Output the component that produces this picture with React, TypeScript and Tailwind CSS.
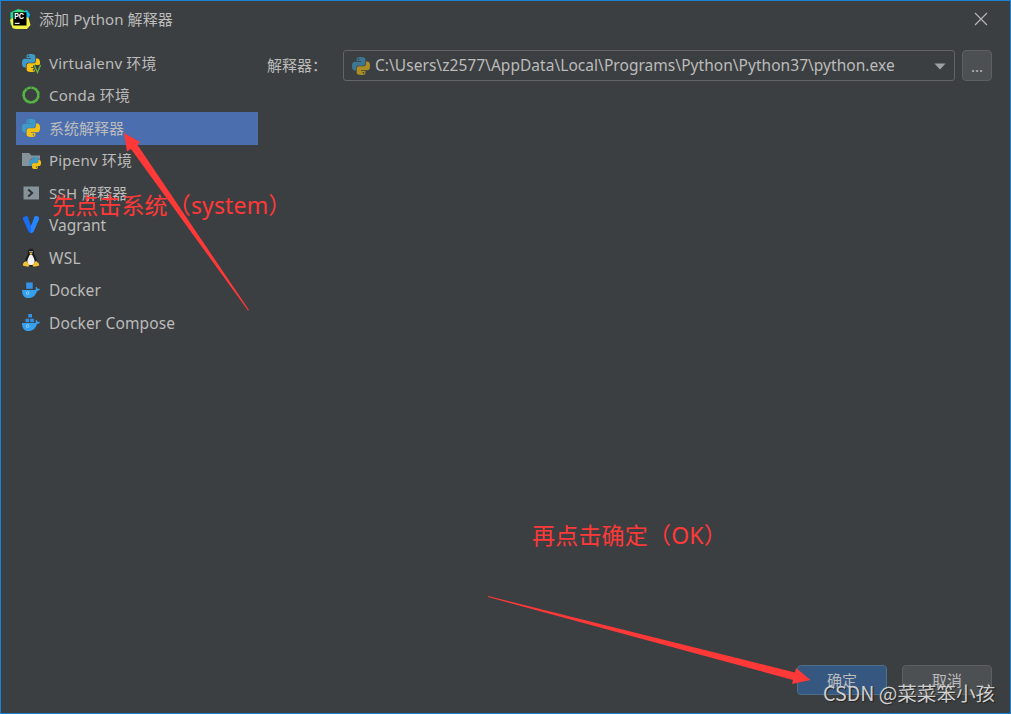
import React from 'react'

const fontClass = "font-['Noto_Sans','Noto_Sans_CJK_SC',sans-serif]"

function PythonIcon({ className = '' }: { className?: string }) {
  const half =
    'M14.25.18l.9.2.73.26.59.3.45.32.34.34.25.34.16.33.1.3.04.26.02.2-.01.13V8.5l-.05.63-.13.55-.21.46-.26.38-.3.31-.33.25-.35.19-.35.14-.33.1-.3.07-.26.04-.21.02H8.77l-.69.05-.59.14-.5.22-.41.27-.33.32-.27.35-.2.36-.15.37-.1.35-.07.32-.04.27-.02.21v3.06H3.17l-.21-.03-.28-.07-.32-.12-.35-.18-.36-.26-.36-.36-.35-.46-.32-.59-.28-.73-.21-.88-.14-1.05-.05-1.23.06-1.22.16-1.04.24-.87.32-.71.36-.57.4-.44.42-.33.42-.24.4-.16.36-.1.32-.05.24-.01h.16l.06.01h8.16v-.83H6.18l-.01-2.75-.02-.37.05-.34.11-.31.17-.28.25-.26.31-.23.38-.2.44-.18.51-.15.58-.12.64-.1.71-.06.77-.04.84-.02 1.27.05zm-6.3 1.98l-.23.33-.08.41.08.41.23.34.33.22.41.09.41-.09.33-.22.23-.34.08-.41-.08-.41-.23-.33-.33-.22-.41-.09-.41.09z'
  return (
    <svg viewBox="0 0 24 24" className={`h-[18px] w-[18px] ${className}`}>
      <path d={half} fill="#3e9bc8" />
      <path d={half} fill="#f5c211" transform="rotate(180 12 12)" />
    </svg>
  )
}

function VirtualenvIcon() {
  return (
    <div className="relative h-5 w-5">
      <PythonIcon className="mt-px ml-px" />
      <svg viewBox="0 0 9 10" className="absolute top-[11px] left-[12px] h-[10px] w-[9px]">
        <path d="M1.2 1L4.4 8.6L7.6 1" fill="#3c3f41" stroke="#3c3f41" strokeWidth="3.2" />
        <path d="M1.2 1L4.4 8.6L7.6 1" fill="none" stroke="#62b543" strokeWidth="1.3" />
      </svg>
    </div>
  )
}

function CondaIcon() {
  return (
    <svg viewBox="0 0 20 20" className="h-5 w-5">
      <circle cx="10" cy="10" r="7.5" fill="none" stroke="#55b541" strokeWidth="2.7" />
      <circle
        cx="10"
        cy="10"
        r="8.6"
        fill="none"
        stroke="#3c3f41"
        strokeWidth="0.8"
        strokeDasharray="1 3"
      />
      <path d="M10 1.5v2M5 3l1 1.600" stroke="#3c3f41" strokeWidth="0.6" />
    </svg>
  )
}

function PipenvIcon() {
  return (
    <div className="relative h-5 w-5">
      <svg viewBox="0 0 20 20" className="h-5 w-5">
        <path d="M1 3h7l2.5 2.5H19V16H1z" fill="#87939a" />
        <circle cx="14" cy="13" r="6" fill="#3c3f41" opacity="0.35" />
      </svg>
      <PythonIcon className="absolute top-[7px] left-2 h-3! w-3!" />
    </div>
  )
}

function SshIcon() {
  return (
    <svg viewBox="0 0 20 20" className="h-5 w-5">
      <path d="M2.5 3.5h15.500v13H2.500z" fill="#87939a" />
      <path d="M7.2 6.4l4 3.600-4 3.600" fill="none" stroke="#2f3335" strokeWidth="2" />
    </svg>
  )
}

function VagrantIcon() {
  return (
    <svg viewBox="0 0 20 20" className="h-5 w-5">
      <path d="M2 2.2L5.5 1l1.8 1v1.6L10 11l3-7.4V2l2.5-1L18 2.2v2L12.3 17l-2.3 1.2L7.7 17 2 4.2z" fill="#1a6df0" />
      <path d="M13 3.6V2l2.5-1L18 2.2v2L12.3 17l-2.3 1.2V11z" fill="#2784ff" />
    </svg>
  )
}

function LinuxIcon() {
  return (
    <svg viewBox="0 0 20 20" className="h-5 w-5">
      <path d="M10 .8c-2 0-3 1.5-3 3.3 0 2.3-.3 3-1.4 4.7C4.4 10.7 3.6 13 4.2 15.5c.6 2 2.8 2.8 5.8 2.8s5.2-.8 5.8-2.8c.6-2.5-.2-4.8-1.4-6.7C13.3 7.1 13 6.4 13 4.1 13 2.3 12 .8 10 .8z" fill="#17191a" />
      <path d="M10 6.5c-1.3 0-1.8 1.2-2.4 2.7-.8 1.8-1.5 3.2-1.2 5 .4 2 1.8 2.8 3.6 2.8s3.200-.8 3.600-2.800c.3-1.800-.4-3.200-1.200-5-.6-1.500-1.100-2.700-2.400-2.700z" fill="#f2f2f2" />
      <path d="M8.3 5.3L10 4.5l1.700.8L10 6.800z" fill="#f5b81c" />
      <circle cx="9" cy="3.8" r=".7" fill="#fff" />
      <circle cx="11" cy="3.8" r=".7" fill="#fff" />
      <path d="M5 12.8l3.3 4.3c.2 1.5-1 1.9-2.3 1.5l-3.7-.8c-.9-.3-.4-1.2-.1-2 .1-1.7 1.3-1 1.8-1.8.3-.5.5-1.100 1-1.200zM15 12.800l-3.300 4.300c-.2 1.500 1 1.900 2.300 1.500l3.700-.8c.9-.3.4-1.200.1-2-.1-1.700-1.300-1-1.800-1.800-.3-.5-.5-1.100-1-1.200z" fill="#f5c033" />
    </svg>
  )
}

function DockerWhale({ compose = false }: { compose?: boolean }) {
  return (
    <svg viewBox="0 0 20 20" className="h-5 w-5">
      {compose ? (
        <path d="M7.3 1h3.700v3.500H7.300zM4.500 5.800h3.700v3.500H4.500zM9.200 5.800h3.700v3.500H9.200z" fill="#3592e8" />
      ) : (
        <path d="M5.2 2.5h6.5v6.3H5.2z" fill="#3592e8" />
      )}
      <path d="M1 10h13.3c.6-.6.7-1.5.3-3.2 1.2.4 1.8 1.2 2 2 .8-.3 1.7-.2 2.4.2-.5 1.3-1.6 1.8-3 1.9-1.3 4.5-4.2 7.1-8.7 7.1C3.5 18 1 15.5 1 10z" fill="#35a0ee" />
      <ellipse cx="6.6" cy="13" rx="1.2" ry="1.6" fill="none" stroke="#9fd4fa" strokeWidth="0.8" />
    </svg>
  )
}

const items = [
  { label: 'Virtualenv 环境', icon: <VirtualenvIcon />, text: 'tracking-[0.18px]' },
  { label: 'Conda 环境', icon: <CondaIcon />, text: 'tracking-[0.25px]' },
  { label: '系统解释器', icon: <PythonIcon className="ml-px" />, text: '', selected: true },
  { label: 'Pipenv 环境', icon: <PipenvIcon />, text: 'tracking-[0.2px]' },
  { label: 'SSH 解释器', icon: <SshIcon />, text: 'tracking-[0.3px]' },
  { label: 'Vagrant', icon: <VagrantIcon />, text: 'text-[15.5px]' },
  { label: 'WSL', icon: <LinuxIcon />, text: 'text-[15.5px] tracking-[0.3px]' },
  { label: 'Docker', icon: <DockerWhale />, text: 'text-[15.5px] tracking-[0.05px]' },
  { label: 'Docker Compose', icon: <DockerWhale compose />, text: 'text-[15.5px] tracking-[0.13px]' },
]

function PyCharmLogo() {
  return (
    <svg viewBox="0 0 22 22" className="h-[22px] w-[22px]">
      <path d="M1.5 4.5L9 1l3 3v14l-7 3-3.500-5z" fill="#21d789" />
      <path d="M14 3.5L18 2l3 4.500-2 5h-5z" fill="#07c3f2" />
      <path d="M9 1l6 1.5L17 5H7z" fill="#3ddc78" />
      <path d="M17 9l2.5 1 2 7-3.500 4H7l-3.500-1L1 12l3-2 4 7h8z" fill="#f2f244" />
      <path d="M4.3 4.3h13.200v13.200H4.300z" fill="#000" />
      <text x="5.2" y="10.8" fontSize="7.2" fontWeight="700" fill="#fff" className="font-['Inter',sans-serif]">
        PC
      </text>
      <path d="M5.8 14.8h4.800v1.100H5.800z" fill="#fff" />
    </svg>
  )
}

export default function App() {
  return (
    <div className={`relative flex h-[714px] w-[1011px] flex-col overflow-hidden border border-[#1883d7] bg-[#3c3f41] text-[15px] leading-5 text-[#bbbbbb] ${fontClass}`}>
      {/* Title bar */}
      <header className="flex h-[46px] shrink-0 items-start justify-between pt-[7px] pr-[22px] pl-2">
        <div className="flex items-start">
          <PyCharmLogo />
          <span className="mt-px ml-2 tracking-[0.1px]">添加 Python 解释器</span>
        </div>
        <svg viewBox="0 0 14 14" className="mt-1 h-[14px] w-[14px]">
          <path d="M1 1l12 12M13 1L1 13" fill="none" stroke="#b4b4b4" strokeWidth="1.2" />
        </svg>
      </header>

      <main className="flex flex-1">
        {/* Environment types */}
        <ul className="-mt-[0.3px] ml-[15px] w-[242px]">
          {items.map((item) => (
            <li
              key={item.label}
              className={`flex h-[32.5px] items-center pl-[5px] ${item.selected ? 'bg-[#4b6eaf] shadow-[0_1px_0_#4b6eaf]' : ''}`}
            >
              <span className="flex w-5 items-center">{item.icon}</span>
              <span className={`ml-2 whitespace-nowrap ${item.text}`}>{item.label}</span>
            </li>
          ))}
        </ul>

        {/* Interpreter path */}
        <div className="mt-[3px] ml-[9px] flex h-[31px] items-center">
          <span className="mb-px w-[76px]">解释器：</span>
          <div className="flex h-[31px] w-[612px] items-center rounded-[3px] border border-[#646464] pl-2">
            <PythonIcon className="opacity-60" />
            <span className="mb-px ml-[5px] flex-1 text-[15.5px] tracking-[0.04px] whitespace-nowrap">
              C:\Users\z2577\AppData\Local\Programs\Python\Python37\python.exe
            </span>
            <svg viewBox="0 0 12 7" className="mt-px mr-2 h-[7px] w-3">
              <path d="M.5.5h11L6 6.5z" fill="#9da2a6" />
            </svg>
          </div>
          <button className="ml-[7px] flex h-[31px] w-[30px] items-center justify-center rounded-[4px] border border-[#5e6060] bg-[#4c5052]">
            ...
          </button>
        </div>
      </main>

      <footer className="flex h-[48px] shrink-0 justify-end gap-[15px] pr-[18px]">
        <button className="h-[30px] w-[90px] rounded-[4px] border border-[#4c708c] bg-[#365880]">确定</button>
        <button className="h-[30px] w-[90px] rounded-[4px] border border-[#5e6060] bg-[#4c5052]">取消</button>
      </footer>

      {/* Hand-added notes over the dialog */}
      <span className="absolute top-[188px] left-[51px] text-[23px] leading-[32px] tracking-[0.15px] whitespace-nowrap text-[#ff3838]">
        先点击系统（system）
      </span>
      <span className="absolute top-[518px] left-[531px] text-[23px] leading-[32px] tracking-[0.2px] whitespace-nowrap text-[#ff3838]">
        再点击确定（OK）
      </span>
      <svg viewBox="0 0 1011 714" className="pointer-events-none absolute -top-px -left-px h-[714px] w-[1011px]">
        <path d="M124 133L140 142L137.5 145L249 310L248 310.5L131 149L127 151.5z" fill="#ff3838" />
        <path d="M810.5 680L796 668L795 672.5L488 596L488 597L793 680L792 684z" fill="#ff3838" />
      </svg>
      <span className="absolute top-[680px] left-[822px] font-['Noto_Sans_CJK_SC',sans-serif] text-[19.6px] leading-6 whitespace-nowrap text-[#d0d0d0] [text-shadow:1px_1px_1px_#222]">
        CSDN @菜菜笨小孩
      </span>
    </div>
  )
}
